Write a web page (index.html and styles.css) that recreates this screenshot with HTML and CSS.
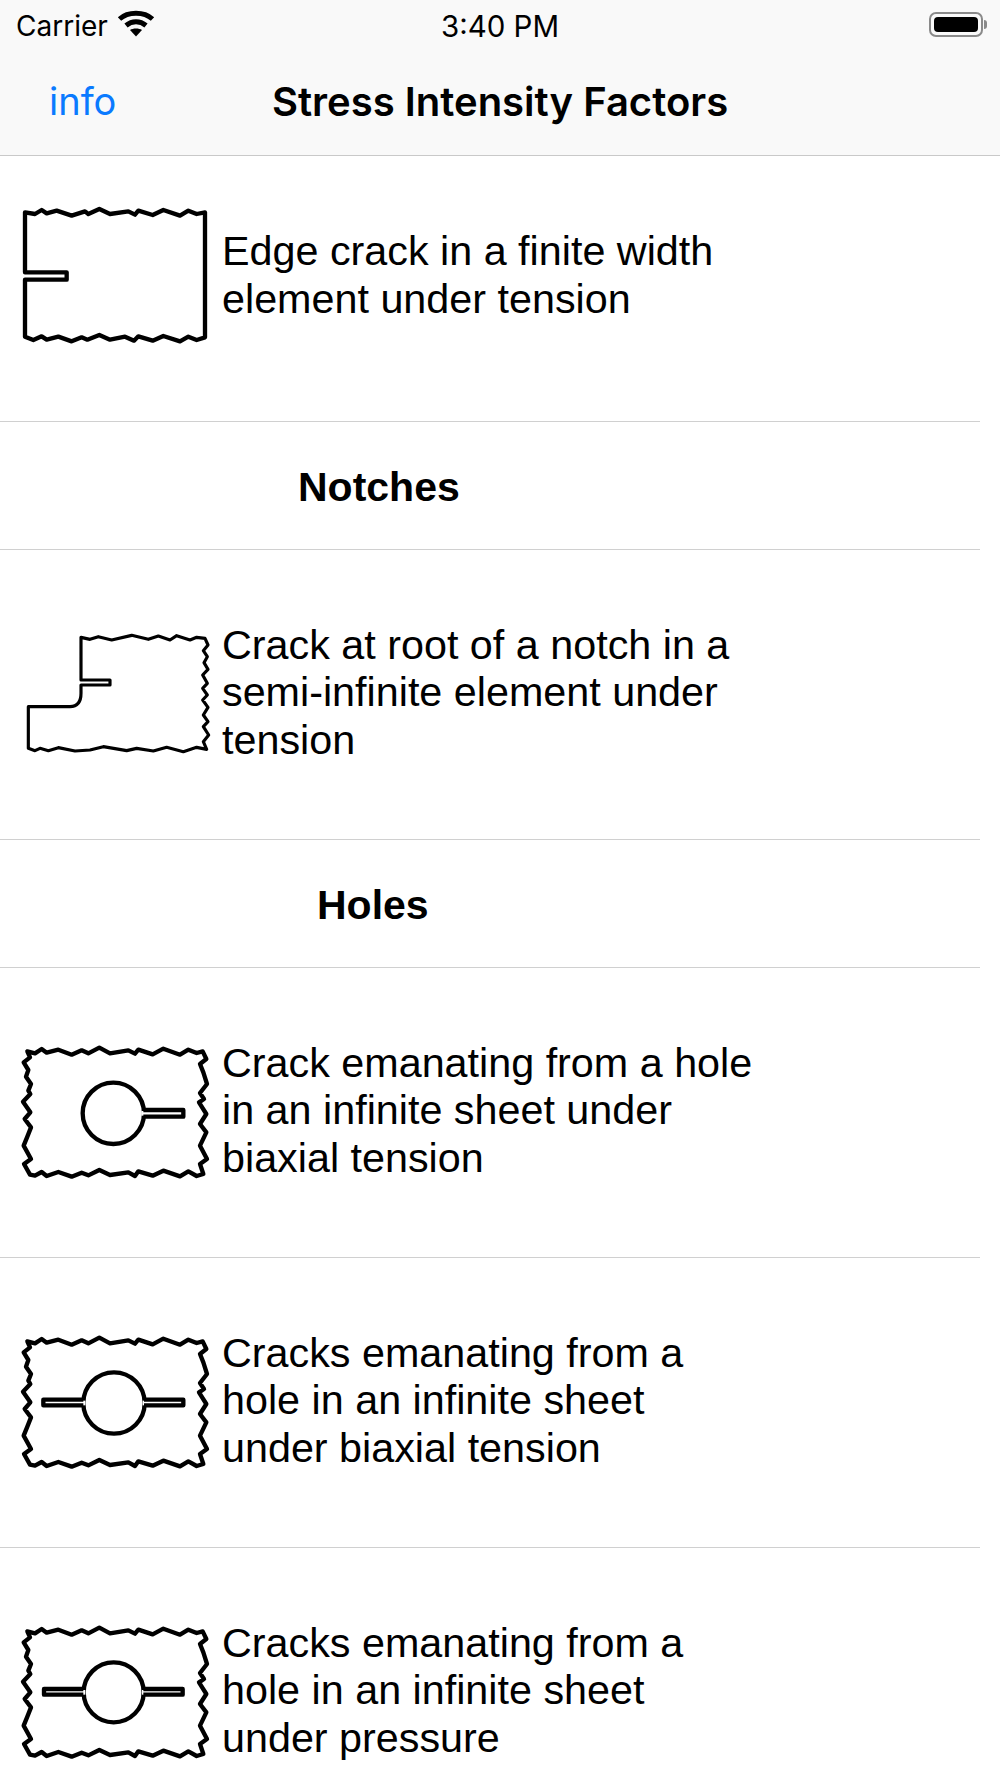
FILE: index.html
```html
<!DOCTYPE html>
<html lang="en">
<head>
<meta charset="utf-8">
<title>Stress Intensity Factors</title>
<link rel="stylesheet" href="styles.css">
</head>
<body>
<svg class="defs" width="0" height="0" aria-hidden="true">
  <defs>
    <path id="frame" d="M82 62L105 68 125 55 140 66 175 57 215 72 245 59 265 68 298 51 330 68 385 59 405 69 415 57 458 71 490 54 540 72 565 57 590 67 608 62L619 85 600 100 610 125 621 160 600 187 612 205 597 215 619 250 600 280 619 305 600 345 621 385 600 400 610 430 590 436 565 422 540 437 490 420 458 435 415 422 405 436 385 425 330 433 298 418 265 434 245 426 215 438 175 424 140 436 125 424 105 435 90 432 72 400 93 385 71 345 82 318 93 290 74 265 91 245 69 213 91 190 85 180 93 160 78 138 85 118 71 95 90 80Z"/>
  </defs>
</svg>
<header class="topbar">
  <div class="status">
    <div class="status-left">
      <span class="carrier">Carrier</span>
      <svg class="wifi" viewBox="0 0 38 28" width="38" height="28" aria-hidden="true">
        <path class="wifi-arc" d="M2.5 10C11 2.3 27 2.3 35.5 10"/>
        <path class="wifi-arc" d="M9 16.5C15 11.5 23 11.5 29 16.5"/>
        <path class="wifi-tip" d="M13 21C16 19 22 19 25 21L19 27.5Z"/>
      </svg>
    </div>
    <div class="time">3:40 PM</div>
    <div class="status-right">
      <div class="battery"><div class="battery-fill"></div></div>
      <div class="battery-nub"></div>
    </div>
  </div>
  <nav class="navbar">
    <div class="nav-info">info</div>
    <div class="nav-title">Stress Intensity Factors</div>
    <div></div>
  </nav>
</header>
<main class="list">
  <section class="row row-first">
    <svg class="diagram" viewBox="60 28 600 450" aria-hidden="true">
      <path class="thick" d="M75 65L105 70 125 58 140 68 170 60 215 75 255 62 265 70 298 55 330 70 385 62 405 72 415 60 458 73 490 58 540 75 565 60 590 70 615 65V440L590 448 565 438 540 452 490 436 458 450 415 437 402 450 375 438 330 447 298 433 262 447 245 440 215 452 175 438 140 447 125 437 100 448 75 438V267H200V245H75Z"/>
    </svg>
    <p class="label">Edge crack in a finite width element under tension</p>
  </section>
  <section class="heading heading-notches">Notches</section>
  <section class="row">
    <svg class="diagram" viewBox="60 0 600 450" aria-hidden="true">
      <path class="thin" d="M243 52L270 58 295 50 335 60 395 46 445 58 475 48 510 60 530 47 570 60 590 52 615 55 624 75 610 92 622 110 612 128 624 148 608 165 622 190 608 205 622 225 608 240 624 262 610 285 624 305 610 320 626 345 610 365 620 388 590 382 550 395 500 382 460 393 410 385 380 392 310 380 270 390 225 393 175 383 145 392 120 385 105 392 85 385V260H210Q243 260 243 220V195H330V180H243Z"/>
    </svg>
    <p class="label">Crack at root of a notch in a semi-infinite element under tension</p>
  </section>
  <section class="heading heading-holes">Holes</section>
  <section class="row">
    <svg class="diagram" viewBox="60 22 600 450" aria-hidden="true">
      <use class="thick" href="#frame"/>
      <circle class="thick" cx="340" cy="248" r="92"/>
      <rect class="gap" x="424" y="241" width="24" height="14"/>
      <path class="thick" d="M430 238H550V258H430"/>
    </svg>
    <p class="label">Crack emanating from a hole in an infinite sheet under biaxial tension</p>
  </section>
  <section class="row">
    <svg class="diagram" viewBox="60 22 600 450" aria-hidden="true">
      <use class="thick" href="#frame"/>
      <circle class="thick" cx="342" cy="247" r="92"/>
      <rect class="gap" x="232" y="240" width="24" height="14"/>
      <rect class="gap" x="428" y="240" width="24" height="14"/>
      <path class="thick" d="M250 237H130V254H250M432 237H550V254H432"/>
    </svg>
    <p class="label">Cracks emanating from a hole in an infinite sheet under biaxial tension</p>
  </section>
  <section class="row">
    <svg class="diagram" viewBox="60 22 600 450" aria-hidden="true">
      <use class="thick" href="#frame"/>
      <circle class="thick" cx="341" cy="245" r="90"/>
      <rect class="gap" x="232" y="238" width="24" height="14"/>
      <rect class="gap" x="426" y="238" width="24" height="14"/>
      <path class="thick" d="M250 235H132V252H250M430 235H548V252H430"/>
    </svg>
    <p class="label">Cracks emanating from a hole in an infinite sheet under pressure</p>
  </section>
</main>
</body>
</html>
```

FILE: styles.css
```css
* { box-sizing: border-box; }
html, body { margin: 0; padding: 0; }
body {
  width: 1000px;
  height: 1778px;
  overflow: hidden;
  background: #fff;
  color: #000;
  font-family: "Liberation Sans", Arial, sans-serif;
}
.defs { position: absolute; }

.topbar {
  height: 156px;
  background: #f9f9f9;
  border-bottom: 1px solid #c9c9c9;
}
.status {
  height: 52px;
  display: grid;
  grid-template-columns: 1fr auto 1fr;
  align-items: center;
  font-family: Inter, "Liberation Sans", sans-serif;
  font-size: 28px;
}
.time { font-size: 29.5px; }
.status-left {
  display: flex;
  align-items: center;
  gap: 9px;
  padding-left: 16px;
}
.carrier { font-size: 28px; }
.wifi { display: block; margin-top: -6px; }
.wifi-arc { fill: none; stroke: #000; stroke-width: 5; }
.wifi-tip { fill: #000; }
.status-right {
  display: flex;
  align-items: center;
  justify-content: flex-end;
  gap: 1px;
  padding-right: 13px;
  margin-top: -4px;
}
.battery {
  width: 54px;
  height: 25px;
  padding: 3px;
  border: 2px solid #8a8a8a;
  border-radius: 7px;
}
.battery-fill { height: 100%; background: #000; border-radius: 4px; }
.battery-nub {
  width: 3px;
  height: 9px;
  background: #8a8a8a;
  border-radius: 0 3px 3px 0;
}
.navbar {
  height: 103px;
  display: grid;
  grid-template-columns: 1fr auto 1fr;
  align-items: center;
  padding-bottom: 5px;
}
.nav-info {
  padding-left: 49px;
  color: #0a7aff;
  font-family: Inter, "Liberation Sans", sans-serif;
  font-size: 38px;
}
.nav-title {
  font-family: Inter, "Liberation Sans", sans-serif;
  font-size: 40px;
  font-weight: 600;
}

.list { display: flex; flex-direction: column; }
.row, .heading {
  width: 980px;
  border-bottom: 1px solid #d0d0d0;
}
.row {
  height: 290px;
  display: flex;
  align-items: center;
  gap: 2px;
  padding-left: 20px;
}
.row-first { height: 266px; padding-bottom: 27px; }
.diagram { display: block; width: 200px; height: 150px; flex: none; }
.label {
  width: 534px;
  margin: 0 0 3px;
  font-size: 41.3px;
  line-height: 47.6px;
}
.row-first .label { margin-bottom: -2px; }
.heading {
  height: 128px;
  display: flex;
  align-items: center;
  padding-top: 3px;
  font-size: 41px;
  font-weight: 700;
}
.heading-notches { padding-left: 298px; }
.heading-holes { padding-left: 317px; }

.thick, .thin { fill: none; stroke: #000; stroke-linejoin: round; }
.thick { stroke-width: 13; }
.thin { stroke-width: 9.5; }
.gap { fill: #fff; }
```
